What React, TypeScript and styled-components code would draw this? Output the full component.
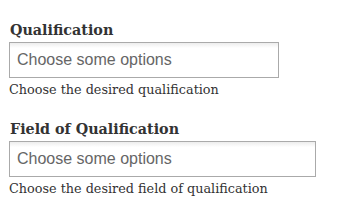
import React from "react";
import styled, { createGlobalStyle } from "styled-components";

const GlobalStyle = createGlobalStyle`
  html, body {
    margin: 0;
    padding: 0;
    background: #fff;
  }
`;

const FIELDS = [
  { label: "Qualification", help: "Choose the desired qualification", width: 270 },
  {
    label: "Field of Qualification",
    help: "Choose the desired field of qualification",
    width: 307,
  },
];

function App() {
  return (
    <>
      <GlobalStyle />
      <Form>
        {FIELDS.map((f, i) => (
          <Field key={"field-" + i}>
            <Label>{f.label}</Label>
            <ChoiceBox $width={f.width}>
              <Placeholder>Choose some options</Placeholder>
            </ChoiceBox>
            <Help>{f.help}</Help>
          </Field>
        ))}
      </Form>
    </>
  );
}

const Form = styled.div`
  padding: 19px 0 0 9px;
  display: flex;
  flex-direction: column;
  gap: 16px;
`;

const Field = styled.div`
  display: flex;
  flex-direction: column;
`;

const Label = styled.label`
  font-family: "DejaVu Serif", Georgia, serif;
  font-weight: bold;
  font-size: 14.3px;
  line-height: 22px;
  margin-bottom: 1px;
  color: #333;
  padding-left: 1px;
`;

const ChoiceBox = styled.div<{ $width: number }>`
  box-sizing: border-box;
  width: ${(p) => p.$width}px;
  height: 36px;
  border: 1px solid #aaa;
  background: linear-gradient(#eee 1%, #fff 15%);
  display: flex;
  align-items: center;
  padding-left: 7px;
`;

const Placeholder = styled.span`
  font-family: "Liberation Sans", Arial, sans-serif;
  font-size: 16px;
  color: #666;
`;

const Help = styled.div`
  font-family: "DejaVu Serif", Georgia, serif;
  font-size: 12.8px;
  line-height: 24px;
  color: #333;
`;

export default App;
